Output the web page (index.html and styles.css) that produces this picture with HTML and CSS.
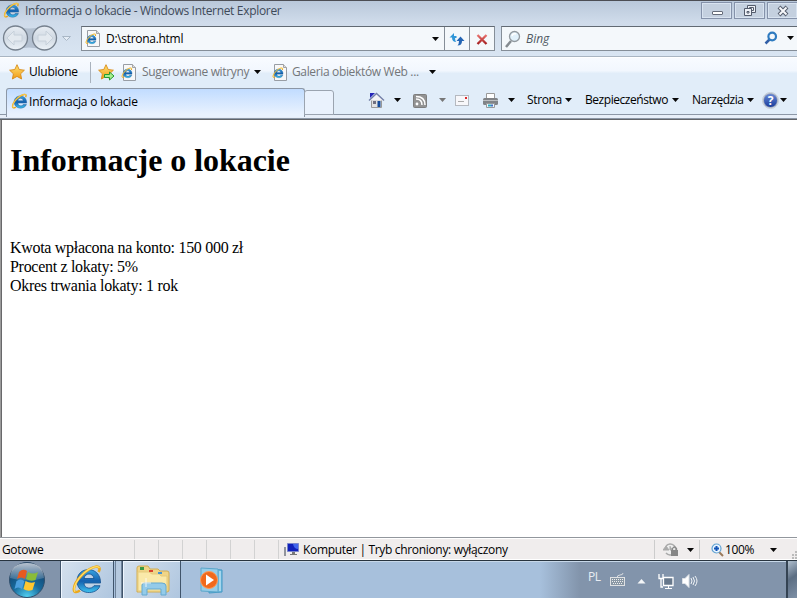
FILE: index.html
```html
<!DOCTYPE html>
<html lang="pl">
<head>
<meta charset="utf-8">
<title>Informacja o lokacie</title>
<link rel="stylesheet" href="styles.css">
</head>
<body>
<svg class="defs" width="0" height="0">
<defs>
<linearGradient id="blue" x1="0" y1="0" x2="0" y2="1"><stop offset="0" stop-color="#3aa5e2"/><stop offset=".5" stop-color="#1560ae"/><stop offset="1" stop-color="#3fc3f0"/></linearGradient>
<linearGradient id="gold" x1="0" y1="0" x2="0" y2="1"><stop offset="0" stop-color="#ffe374"/><stop offset="1" stop-color="#f09a14"/></linearGradient>
<linearGradient id="red" x1="0" y1="0" x2="0" y2="1"><stop offset="0" stop-color="#ea7470"/><stop offset="1" stop-color="#a51e20"/></linearGradient>
<linearGradient id="disc" x1="0" y1="0" x2="0" y2="1"><stop offset="0" stop-color="#e9eef4"/><stop offset=".5" stop-color="#d0d9e3"/><stop offset="1" stop-color="#edf3f8"/></linearGradient>
<radialGradient id="orb" cx=".5" cy="1" r=".95"><stop offset="0" stop-color="#55d5f5"/><stop offset=".45" stop-color="#176b9d"/><stop offset="1" stop-color="#123b67"/></radialGradient>
<linearGradient id="shine" x1="0" y1="0" x2="0" y2="1"><stop offset="0" stop-color="#fff" stop-opacity=".7"/><stop offset="1" stop-color="#fff" stop-opacity=".12"/></linearGradient>
<symbol id="ie" viewBox="0 0 32 32">
<path d="M29.500 19H13c0 6 8 6.500 10 2.700h6C26 31.500 6 31.500 6 17C6 1.500 30 1.500 29.500 19zM13 14.500h10c-1-6-9-6-10 0z" fill="url(#blue)" fill-rule="evenodd" stroke="#14508f" stroke-width=".8"/>
<path d="M9 26.500C1 32 0 22 11 11C21 1 32 0 27.500 8" fill="none" stroke="#eba81c" stroke-width="2.600"/>
<path d="M4 28C1 24 7 14 13 9C20 3 27 1 28.500 4" fill="none" stroke="#ffe06a" stroke-width="1.200"/>
</symbol>
<symbol id="page" viewBox="0 0 16 17"><path d="M2.5.5h9l3 3v13h-12z" fill="#f8f8f8" stroke="#989da4"/><path d="M11.5.5v3h3" fill="#ddd" stroke="#a4a4a4"/><use href="#ie" x="0" y="3" width="12" height="12"/></symbol>
<symbol id="down" viewBox="0 0 7 4"><path d="M0 0h7L3.5 4z" fill="currentColor"/></symbol>
<symbol id="star" viewBox="0 0 16 16"><path d="M8 .7l2.2 4.8 5.2.7-3.8 3.6 1 5.2L8 12.4 3.4 15l1-5.2L.6 6.2l5.2-.7z" fill="url(#gold)" stroke="#d88b18" stroke-width=".9"/></symbol>
</defs>
</svg>

<div class="window">
<header class="titlebar">
<svg class="title-logo" width="17" height="17"><use href="#ie"/></svg>
<span class="title-text">Informacja o lokacie - Windows Internet Explorer</span>
<div class="controls">
<button><svg width="29" height="15"><rect x="10.500" y="8.500" width="10" height="3" rx=".5" fill="#fff" stroke="#646b79"/></svg></button>
<button><svg width="29" height="15" fill="#eef1f7" stroke="#545c6c"><path d="M12.500 2.500h8v7h-8z"/><path d="M14.500 4.500h4v3h-4z"/><path d="M9.500 5.500h7v7h-7z"/><path d="M12 8.500h2v1.500h-2z"/></svg></button>
<button><svg width="29" height="15"><path d="M11 4l8 8M19 4l-8 8" stroke="#545c6c" stroke-width="4"/><path d="M11.500 4.500l7 7M18.500 4.500l-7 7" stroke="#f7f8fb" stroke-width="2"/></svg></button>
</div>
</header>

<nav class="navigation">
<svg class="history" width="75" height="28">
<path d="M14 2Q29 7 44 2V26Q29 21 14 26z" fill="#b3c0d0"/>
<g fill="url(#disc)" stroke="#76818e" stroke-width="1.300"><circle cx="15.500" cy="14" r="12"/><circle cx="44.500" cy="14" r="12"/></g>
<path d="M7 14l7-7v4h8v6h-8v4zM53 14l-7-7v4h-8v6h8v4z" fill="#e3e9ef" stroke="#c6d0da"/>
<path d="M62.500 12.500h8l-4 4z" fill="#e5edf6" stroke="#a9b7c6"/>
</svg>
<div class="address">
<svg class="address-icon" width="16" height="17"><use href="#page"/></svg>
<span class="address-text">D:\strona.html</span>
<svg class="arrow address-arrow"><use href="#down"/></svg>
<div class="cell"><svg width="16" height="16"><path d="M.5 6.500L5 2v3h2.500v2H6q0 3 1.500 4Q3 11 3 6.500z" fill="#3197d8"/><path d="M15.500 10L11.500 5.500 7.500 10H10q0 3-1.500 4.500 4.500 0 4.500-4.500z" fill="#2465b4"/></svg></div>
<div class="cell"><svg width="14" height="14"><path d="M2.500 3l9 9M11.500 3l-9 9" stroke="url(#red)" stroke-width="2.300"/></svg></div>
</div>
<div class="search">
<svg width="17" height="18"><path d="M6 11l-5 6" stroke="#858b90" stroke-width="2.500"/><circle cx="9.500" cy="6.500" r="5" fill="#e1f1fb" stroke="#92999f" stroke-width="1.300"/><path d="M7 6q1-3 4-2" stroke="#fff" fill="none" stroke-width="1.500"/></svg>
<span class="bing">Bing</span>
<svg class="find" width="14" height="14"><path d="M5.500 8.500L1.500 12.500" stroke="#315fa7" stroke-width="2.500"/><circle cx="8.200" cy="5.500" r="3.800" fill="none" stroke="#2e7bc0" stroke-width="2.200"/></svg>
<svg class="arrow"><use href="#down"/></svg>
</div>
</nav>

<div class="favorites">
<svg class="fav-star" width="16" height="16"><use href="#star"/></svg><span class="fav-title">Ulubione</span>
<i class="divider"></i>
<svg class="fav-add" width="17" height="17"><use href="#star" width="16" height="16"/><path d="M6.500 10.500h5v-2.500l4.500 4-4.500 4v-2.500h-5z" fill="#a7ed8e" stroke="#249b32"/></svg>
<svg class="fav-page" width="16" height="17"><use href="#page"/></svg><span class="link suggested">Sugerowane witryny</span><svg class="arrow"><use href="#down"/></svg>
<svg class="fav-page second" width="16" height="17"><use href="#page"/></svg><span class="link gallery">Galeria obiektów Web ...</span><svg class="arrow"><use href="#down"/></svg>
</div>

<div class="tabs">
<div class="tab"><svg width="17" height="17"><use href="#ie"/></svg><span>Informacja o lokacie</span></div>
<div class="new-tab"></div>
<div class="commands">
<svg class="home" width="17" height="17"><path d="M3.500 8h10v7.500h-10z" fill="#e2e2e2" stroke="#999"/><path d="M1 8.500l7.500-7 7.500 7" fill="#f4f4f6" stroke="#7480a8" stroke-width="1.500"/><path d="M2 1h5L2 6z" fill="#2424b7"/><path d="M5 9h3v3H5z" fill="#707080"/><path d="M9.500 9h3v6h-3z" fill="#164c9b"/></svg>
<svg class="arrow"><use href="#down"/></svg>
<svg class="rss" width="14" height="14"><rect x=".5" y=".5" width="13" height="13" rx="1" fill="#939393" stroke="#7e7e7e"/><path d="M3 5q6 0 6 6M3 2.500q9 0 9 8.500" fill="none" stroke="#fff" stroke-width="1.500"/><circle cx="4" cy="10" r="1.400" fill="#fff"/></svg>
<svg class="arrow muted"><use href="#down"/></svg>
<svg class="mail" width="14" height="11"><rect x=".5" y=".5" width="13" height="10" fill="#f7f7fa" stroke="#b5b9c0"/><path d="M10 2h2v2h-2z" fill="#dc292c"/><path d="M3 6.500h6" stroke="#aaa"/></svg>
<svg class="printer" width="17" height="17"><path d="M4.500 1.500h8V7h-8z" fill="#fff" stroke="#999"/><rect x="1" y="6" width="15" height="7" rx="1.500" fill="#808387"/><path d="M1 8.500h15" stroke="#bcbec0"/><path d="M4.500 11.500h8v4h-8z" fill="#edf5fa" stroke="#999"/><path d="M6 13.500h3" stroke="#2cabc1" stroke-width="2"/><path d="M9 13.500h2" stroke="#4a70c4" stroke-width="2"/></svg>
<svg class="arrow"><use href="#down"/></svg>
<span class="page-menu">Strona</span><svg class="arrow"><use href="#down"/></svg>
<span class="safe-menu">Bezpieczeństwo</span><svg class="arrow"><use href="#down"/></svg>
<span class="tool-menu">Narzędzia</span><svg class="arrow"><use href="#down"/></svg>
<span class="help">?</span><svg class="arrow help-arrow"><use href="#down"/></svg>
</div>
</div>

<main>
<h1>Informacje o lokacie</h1>
<p>Kwota wpłacona na konto: 150 000 zł<br>Procent z lokaty: 5%<br>Okres trwania lokaty: 1 rok</p>
</main>

<footer class="status">
<span class="ready">Gotowe</span>
<i></i><i></i><i></i><i></i><i></i><i></i>
<div class="zone"><svg width="17" height="16"><path d="M1 5h2v9H1z" fill="#92959c"/><path d="M4.500 1.500h11v8h-11z" fill="#1020ba" stroke="#7a86cc"/><path d="M10 2h5v5q-4 0-5-5" fill="#4165ed"/><path d="M9 10h3v2h2v1H7v-1h2z" fill="#777"/></svg><span>Komputer | Tryb chroniony: wyłączony</span></div>
<div class="privacy"><svg width="17" height="16"><path d="M3 4a5.500 5.500 0 1 1 0 7" fill="#eee" stroke="#aaa" stroke-width="1.500"/><path d="M0 8l3-4 3 4zM7 4v4h3" fill="#aaa" stroke="#aaa"/><path d="M9.500 8V6.500q2-3 4 0V8" fill="none" stroke="#888" stroke-width="1.300"/><path d="M8 8h7v6H8z" fill="#868686"/></svg><svg class="arrow"><use href="#down"/></svg></div>
<div class="zoom"><svg width="13" height="14"><path d="M8 9l4 4" stroke="#9a795b" stroke-width="2"/><circle cx="5.500" cy="5.500" r="4.500" fill="#e9f5ff" stroke="#61a2d2" stroke-width="1.200"/><path d="M3 5.500h5M5.500 3v5" stroke="#1455b7" stroke-width="2"/></svg><span>100%</span><svg class="arrow"><use href="#down"/></svg><svg class="grip" width="6" height="8"><path d="M4 0h2v2H4zM1 3h2v2H1zM4 3h2v2H4zM1 6h2v2H1zM4 6h2v2H4z" fill="#bbb"/></svg></div>
</footer>

<div class="taskbar">
<div class="start"><svg width="60" height="38"><circle cx="27" cy="20" r="17.500" fill="url(#orb)" stroke="#31506d"/><path d="M10 18Q11 3 27 3T44 18Q27 23 10 18" fill="url(#shine)"/><path d="M19 12q4-4 8-1l-2 8q-4-3-8 0z" fill="#e65a20"/><path d="M28 12q5 3 10 0l-2.500 8q-5 2-9.500-1z" fill="#8abc38"/><path d="M16.500 21q4-3 8 0l-2.500 8q-4-3-7.500 0z" fill="#4c9fdd"/><path d="M25.500 21q5 3 9.500 1l-2.500 8q-5 2-9-1z" fill="#fec62f"/></svg></div>
<div class="task task-ie"><svg width="32" height="32"><use href="#ie"/></svg></div>
<div class="stack"></div>
<div class="task task-folder"><svg width="36" height="32"><path d="M3 3q0-2 2-2h9l2 3h8l2 2h7q2 0 2 2v17q0 2-2 2H3z" fill="#f0d587" stroke="#d0ac53"/><path d="M4 7h11l3 2h7l2 2h6v15H4z" fill="#fae9a9" stroke="#e5cb7c"/><path d="M6 2h4v3H6z" fill="#3b9a43"/><path d="M15 5h4v2h-4z" fill="#db432d"/><path d="M24 7h4v2h-4z" fill="#4393d4"/><path d="M8 30V20q0-2 3-2h17q4 0 4 3v9h-5v-6H13v6z" fill="#94cbe9" stroke="#65a9d0"/><path d="M12 13v9M7 18h10" stroke="#fff" opacity=".8"/></svg></div>
<div class="media"><svg width="30" height="28"><path d="M11 3l13 1v22l-13 1z" fill="#74bde0" stroke="#4298c4"/><path d="M3 2l17 1v23L3 25z" fill="#96cde8" stroke="#5ba7cb"/><path d="M22 5v20" stroke="#d6effa"/><circle cx="11" cy="14" r="8.500" fill="#f0691c" stroke="#ff9b57"/><path d="M8 8.500l8 5.500-8 5.500z" fill="#fff"/></svg></div>
<div class="tray"><span>PL</span>
<svg class="keyboard" width="15" height="14"><path d="M7 5q0-3 3-3 3 0 3-2" fill="none" stroke="#d9dcdf"/><rect x=".5" y="4.500" width="14" height="8" fill="#8997a4" stroke="#dfe1e3"/><path d="M2 6.500h11M2 8.500h11M3 10.500h9" stroke="#eee" stroke-dasharray="1 1"/></svg>
<svg class="tri" width="9" height="5"><path d="M.5 4.500L4.500 0 8.500 4.500z" fill="#f4f6f8"/></svg>
<svg class="network" width="16" height="17"><path d="M5.500 4.500h9.500v8h-9.500z" fill="#67788c" stroke="#fff" stroke-width="1.300"/><path d="M7 15.500h7M10.500 13v2" stroke="#fff"/><path d="M1 1v4.500h4V1M3 5v9h2" fill="none" stroke="#fff" stroke-width="1.300"/></svg>
<svg class="speaker" width="17" height="16"><path d="M.5 5.500h2.500l4-4v13l-4-4H.5z" fill="#fff" stroke="#dce1e6"/><path d="M9 5q2 3 0 6M11 4q3 4 0 8M13 3q4 5 0 10" fill="none" stroke="#f1f4f7"/></svg>
</div><div class="desktop"></div>
</div>
</div>
</body>
</html>
```
FILE: styles.css
```css
* { box-sizing: border-box; }
body { margin: 0; overflow: hidden; font: 12px/16px "Open Sans", sans-serif; letter-spacing: -.35px; color: #000; }
svg { display: block; flex: none; }
.defs { position: absolute; }
.window { width: 797px; height: 598px; display: flex; flex-direction: column; background: #fff; }
.arrow { width: 7px; height: 4px; color: #080808; }
span { white-space: nowrap; }
.titlebar { height: 22px; border-top: 1px solid #4c4e54; background: linear-gradient(#b9c8da, #cfdbea); display: flex; align-items: center; }
.title-logo { margin: 0 0 2px 3px; }
.title-text { margin: 0 0 1px 5px; color: #3e4a59; letter-spacing: -.32px; }
.controls { margin: 1px -1px 3px auto; display: flex; gap: 2px; }
.controls button { width: 31px; height: 17px; padding: 0; border: 1px solid #8592aa; box-shadow: inset 0 0 0 1px #d8e3f0; background: #c4d0df; }
.navigation { height: 35px; padding-top: 2px; display: flex; align-items: center; background: linear-gradient(#cfdbea, #d9e5f2); border-bottom: 1px solid #a9b5c2; }
.history { margin-bottom: 4px; }
.address, .search { height: 25px; margin-bottom: 3px; display: flex; align-items: center; background: #f4f8fb; border: 1px solid #858e98; border-top-color: #626a73; }
.address { margin-left: 6px; width: 414px; }
.address-icon { margin-left: 3px; }
.address-text { margin-left: 5px; letter-spacing: -.3px; }
.address-arrow { margin: 0 5px 0 auto; }
.cell { width: 25px; align-self: stretch; border-left: 1px solid #858e98; display: flex; align-items: center; justify-content: center; }
.search { width: 296px; margin-left: 6px; border-right: 0; padding-left: 3px; }
.bing { margin-left: 4px; font-style: italic; color: #505a64; letter-spacing: -.05px; }
.find { margin: 0 9px 2px auto; }
.search .arrow { margin: 0 3px 2px 0; }
.favorites { height: 29px; border-top: 1px solid #fff; display: flex; align-items: center; background: linear-gradient(#f8fbff 0, #f2f7fe 45%, #e1edf9 55%); }
.fav-star { margin-left: 9px; }
.fav-title { width: 50px; margin-left: 4px; letter-spacing: -.25px; }
.divider { height: 21px; margin-left: 11px; width: 1px; background: #a9b2bd; }
.fav-add { margin-left: 7px; }
.fav-page { margin-left: 6px; }
.link { color: #737679; margin-left: 5px; }
.suggested { width: 112px; }
.second { margin-left: 11px; }
.gallery { width: 137px; margin-left: 4px; }
.tabs { height: 34px; padding-top: 2px; display: flex; background: linear-gradient(#e1edf9 28px, #8c97a6 28px, #8c97a6 29px, #e7eef8 29px, #e7eef8 32px, #8c97a6 32px, #8c97a6 33px, #626468 33px); }
.tab { width: 299px; height: 29px; margin-left: 6px; border: 1px solid #8c97a6; border-bottom: 0; border-radius: 3px 3px 0 0; background: linear-gradient(#c1dcff, #e9f2fe 90%); display: flex; padding: 4px 0 0 4px; }
.tab span { margin: 1px 0 0 1px; letter-spacing: -.18px; }
.new-tab { width: 30px; height: 25px; margin: 2px 0 0 -1px; border: 1px solid #9ba4b0; border-radius: 3px 3px 0 0; background: #eaf2fd; }
.commands { height: 24px; flex: 1; display: flex; align-items: center; }
.commands > * { flex: none; }
.home { margin: 0 9px 0 34px; }
.rss { margin: 2px 12px 0; }
.muted { color: #777; }
.mail { margin-left: 9px; }
.printer { margin: 0 9px 0 13px; }
.page-menu { width: 38px; margin-left: 12px; }
.safe-menu { width: 87px; margin-left: 13px; letter-spacing: -.45px; }
.tool-menu { width: 55px; margin-left: 13px; letter-spacing: -.45px; }
.help { width: 15px; height: 15px; margin-left: 9px; border: 1px solid #9ca4b5; outline: 1px solid #c4ccd7; border-radius: 50%; background: linear-gradient(#6688d5, #193c9d); color: #fff; font: bold 12px/13px "Open Sans", sans-serif; text-align: center; }
.help-arrow { margin-left: 2px; }
main { height: 417px; flex: none; border-left: 1px solid #9b9b9b; box-shadow: inset 1px 0 #68686a; padding-left: 9px; background: #fff; color: #000; font: 16px/19px "Liberation Serif", serif; }
h1 { margin: 22px 0 59px; font-size: 32px; line-height: 37px; letter-spacing: -.05px; }
main p { margin: 0; letter-spacing: -.3px; }
.status { height: 23px; border-top: 1px solid #92979d; box-shadow: inset 0 1px #fff; border-bottom: 1px solid #fff; display: flex; align-items: center; background: #f0eded; padding-top: 2px; }
.ready { width: 134px; padding-left: 2px; }
.status i { width: 24px; align-self: stretch; border-left: 1px solid #d2d2d2; }
.zone { width: 376px; align-self: stretch; display: flex; align-items: center; padding-left: 4px; border-left: 1px solid #d2d2d2; }
.zone span { margin-left: 3px; letter-spacing: -.33px; }
.privacy { width: 45px; align-self: stretch; display: flex; align-items: center; padding-left: 8px; border-left: 1px solid #ccc; }
.privacy .arrow { margin-left: 7px; }
.zoom { flex: 1; align-self: stretch; display: flex; align-items: center; padding-left: 11px; border-left: 1px solid #ccc; }
.zoom span { margin-left: 1px; width: 45px; }
.grip { margin: 11px 0 0 auto; }
.taskbar { height: 38px; flex: none; border-top: 1px solid #28343f; box-shadow: inset 0 1px #c7d8e9; background: linear-gradient(90deg, #a7c0dc 540px, #8294ab 580px); display: flex; }
.start { width: 60px; background: #8294ab; }
.start svg { margin-top: -1px; }
.task { border: solid #40546b; border-width: 0 1px; background: linear-gradient(120deg, #d5e1ee, #afc6df); box-shadow: inset 1px 1px #eef6ff; display: flex; justify-content: center; }
.task-ie { width: 54px; padding: 3px 0 0; }
.stack { width: 7px; border: solid #6e8299; border-width: 0 1px; background: #b5c9df; margin-left: 1px; }
.task-folder { width: 59px; padding: 4px 0 0; }
.media { width: 60px; padding: 5px 0 0 17px; }
.tray { width: 545px; padding-left: 347px; display: flex; align-items: center; color: #e8edf3; }
.tray span { width: 22px; margin-top: -5px; }
.tri { margin: 4px 0 0 12px; }
.network { margin: 3px 0 0 12px; }
.speaker { margin: 2px 0 0 8px; }
.desktop { width: 11px; border-left: 2px solid #344353; background: linear-gradient(145deg, #b0bfce, #5c6e83 45%, #7e90a6); }
```
